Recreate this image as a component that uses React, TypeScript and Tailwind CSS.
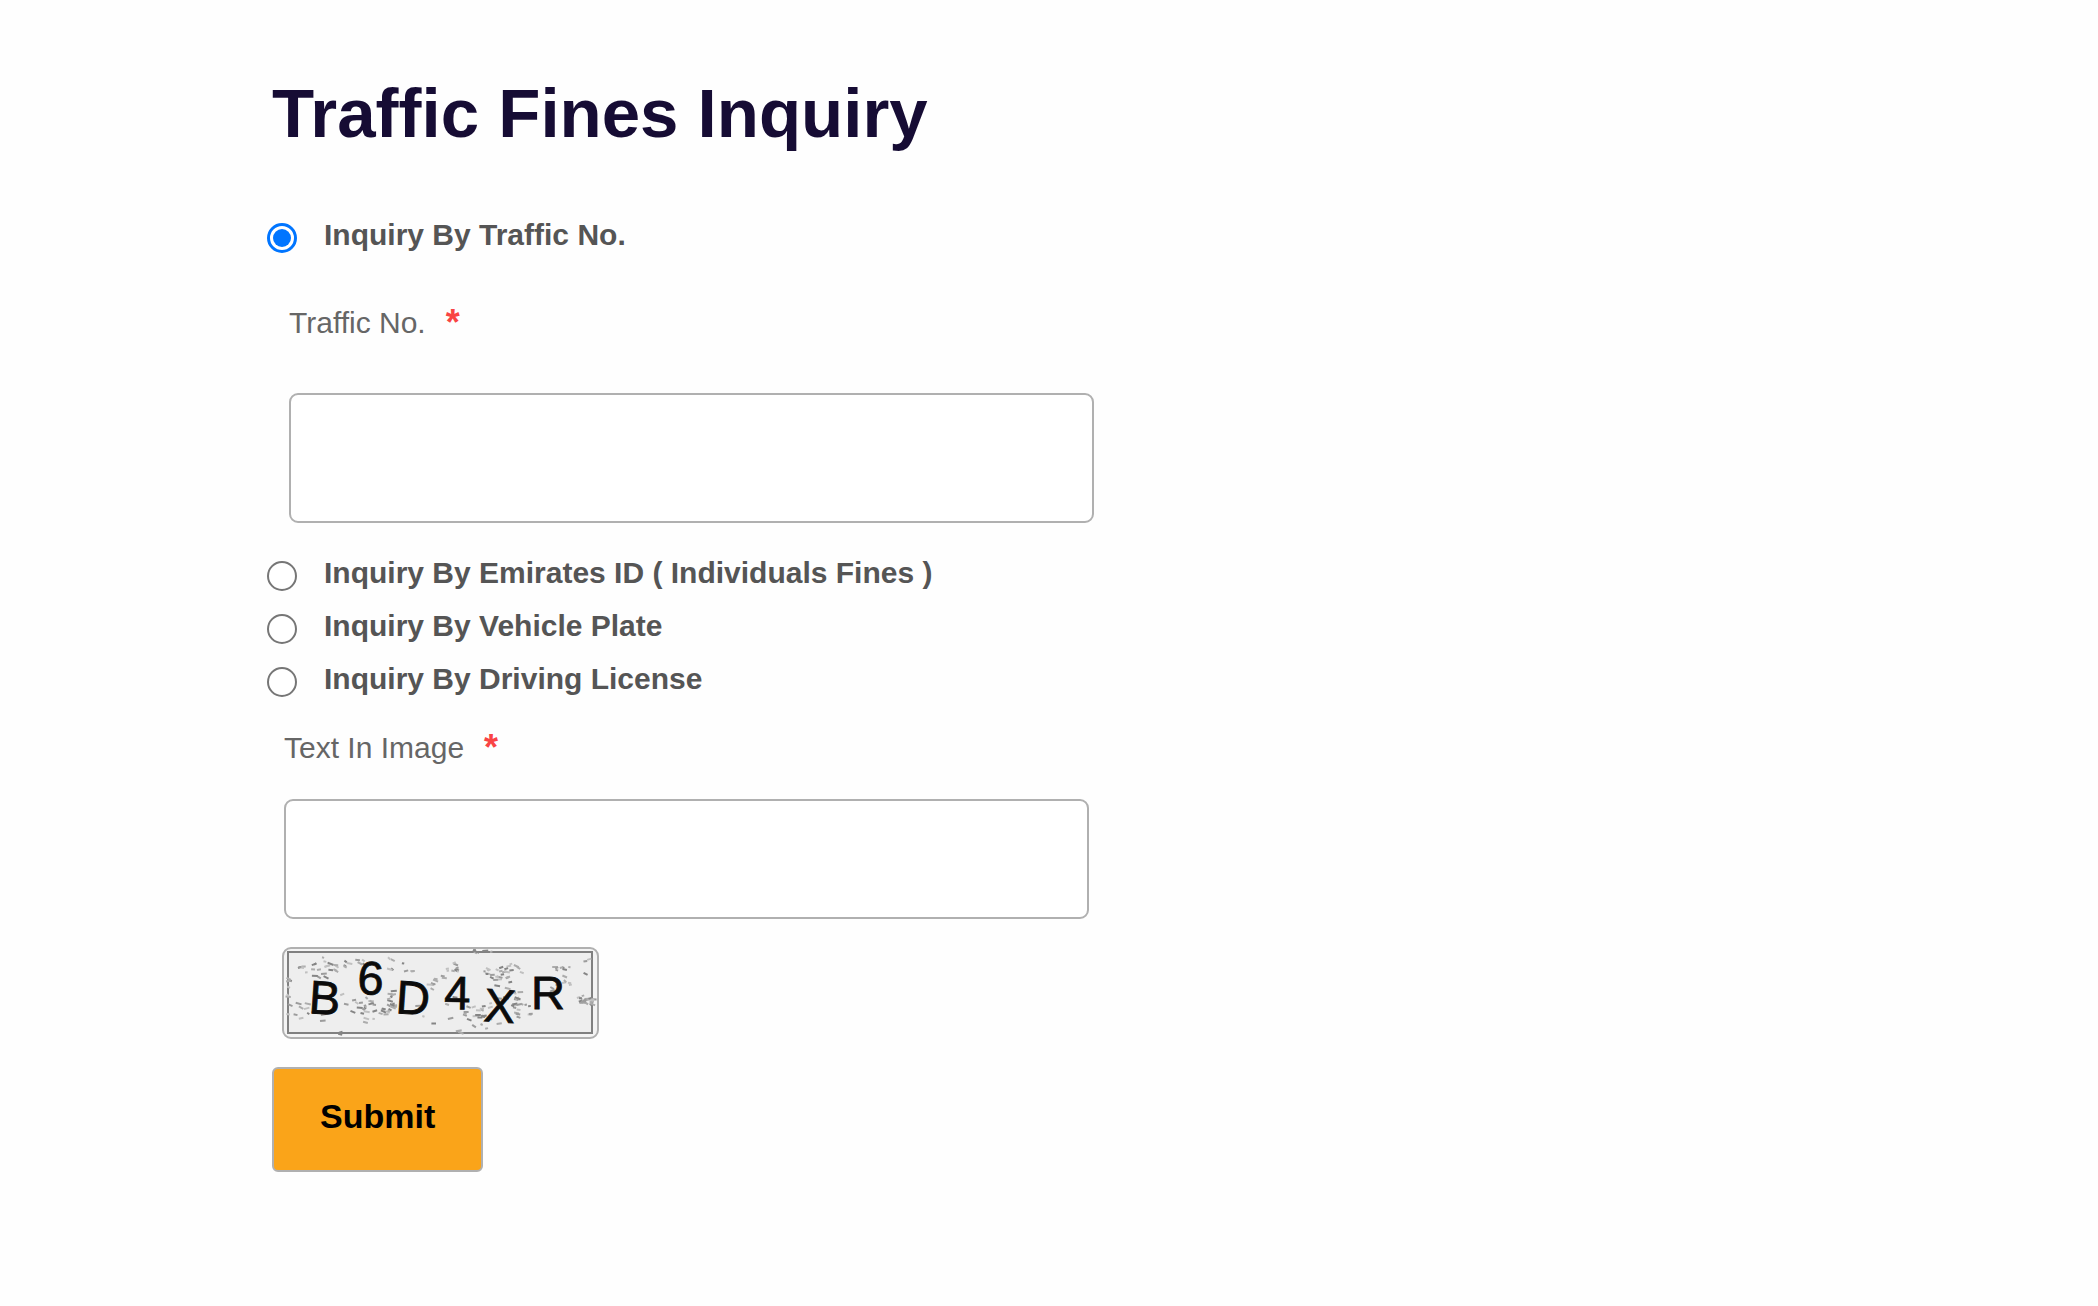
import { useState } from "react";

const font = "font-['Liberation_Sans',Arial,sans-serif]";

const captchaChars = [
  { ch: "B", x: 24, y: 64, tilt: 4 },
  { ch: "6", x: 73, y: 45, tilt: 2 },
  { ch: "D", x: 111, y: 64, tilt: 4 },
  { ch: "4", x: 160, y: 60, tilt: 1 },
  { ch: "X", x: 199, y: 72, tilt: 4 },
  { ch: "R", x: 247, y: 60, tilt: 0 },
];

// Centre x, centre y, half width, half height, number of strokes
const clusters = [
  [30, 20, 16, 8, 18],
  [60, 16, 22, 8, 14],
  [25, 55, 16, 18, 12],
  [72, 54, 16, 8, 12],
  [92, 64, 16, 10, 18],
  [106, 52, 3, 10, 14],
  [112, 16, 16, 8, 8],
  [150, 35, 12, 10, 8],
  [166, 18, 7, 5, 9],
  [192, 62, 14, 8, 20],
  [212, 26, 14, 9, 22],
  [222, 44, 14, 12, 12],
  [228, 18, 8, 5, 5],
  [236, 62, 10, 8, 14],
  [277, 26, 10, 10, 14],
  [270, 44, 8, 6, 6],
  [300, 51, 8, 4, 20],
  [185, 78, 40, 5, 7],
  [150, 58, 24, 16, 6],
  [3, 45, 2, 25, 8],
  [198, 2, 10, 1, 6],
  [303, 20, 5, 10, 3],
  [58, 84, 4, 1, 2],
];

function makeNoise() {
  let seed = 11;
  const rnd = () => {
    seed = (seed * 16807) % 2147483647;
    return seed / 2147483647;
  };
  const shades = ["#9c9c9c", "#acacac", "#c0c0c0", "#858585"];
  return clusters.flatMap(([cx, cy, rx, ry, n]) =>
    Array.from({ length: n }, () => {
      const x = cx + (rnd() * 2 - 1) * rx;
      const y = cy + (rnd() * 2 - 1) * ry;
      const dx = 2 + rnd() * 4;
      const dy = (rnd() - 0.4) * 4;
      return {
        d: `M${x.toFixed(1)} ${y.toFixed(1)}l${dx.toFixed(1)} ${dy.toFixed(1)}`,
        stroke: shades[Math.floor(rnd() * 4)],
      };
    }),
  );
}

const noise = makeNoise();

function Captcha() {
  return (
    <div className="mt-7 ml-[10px] w-[317px] overflow-hidden rounded-[9px] border-2 border-[#b0b0b0] bg-[#f4f4f4]">
      <svg viewBox="0 0 313 88" className="block w-full" role="img" aria-label="Captcha image">
        <rect x="4" y="3" width="304" height="81" fill="#eeeeee" stroke="#808080" strokeWidth="2" />
        {noise.map((n, i) => (
          <path key={i} d={n.d} stroke={n.stroke} strokeWidth="2" fill="none" />
        ))}
        {captchaChars.map((c) => (
          <g key={c.ch} transform={`translate(${c.x} ${c.y}) rotate(${c.tilt})`}>
            <text
              fontFamily="Liberation Sans, Arial, sans-serif"
              fontSize="47"
              fill="#0b0b0b"
              stroke="#0b0b0b"
              strokeWidth="0.8"
            >
              {c.ch}
            </text>
          </g>
        ))}
      </svg>
    </div>
  );
}

function Option({
  id,
  label,
  value,
  onChange,
}: {
  id: string;
  label: string;
  value: string;
  onChange: (id: string) => void;
}) {
  return (
    <div className="-ml-[5px] flex h-[53px] items-start">
      <input
        type="radio"
        name="inquiry"
        id={id}
        checked={value === id}
        onChange={() => onChange(id)}
        className="mt-[11px] grid size-[30px] shrink-0 appearance-none place-items-center rounded-full border-2 border-[#767676] bg-white before:size-[18px] before:rounded-full checked:border-[3px] checked:border-[#0075ff] checked:before:bg-[#0075ff]"
      />
      <label htmlFor={id} className="ml-[27px] text-[30px] leading-[45px] font-bold text-[#555555]">
        {label}
      </label>
    </div>
  );
}

function FieldLabel({ htmlFor, text }: { htmlFor: string; text: string }) {
  return (
    <label htmlFor={htmlFor} className="flex text-[30px] leading-[45px] text-[#666666]">
      {text}
      <span className="ml-5 text-[36px] font-bold text-[#f94444]">*</span>
    </label>
  );
}

const inputStyle =
  "block w-full rounded-[9px] border-2 border-[#b0b0b0] bg-white px-6 text-[30px] text-[#555555] outline-none";

export default function App() {
  const [mode, setMode] = useState("traffic");
  return (
    <main className={`min-h-screen bg-[#fefefe] pt-[72px] pr-6 pb-16 pl-[272px] ${font}`}>
      <form className="max-w-[822px]" onSubmit={(e) => e.preventDefault()}>
        <h1 className="mb-14 text-[69px] leading-[84px] font-bold text-[#160c34]">
          Traffic Fines Inquiry
        </h1>

        <Option id="traffic" label="Inquiry By Traffic No." value={mode} onChange={setMode} />
        <div className="mb-[27px] pt-[35px] pl-[17px]">
          <FieldLabel htmlFor="traffic-no" text="Traffic No." />
          <input id="traffic-no" type="text" className={`mt-12 h-[130px] ${inputStyle}`} />
        </div>

        <Option
          id="emirates"
          label="Inquiry By Emirates ID ( Individuals Fines )"
          value={mode}
          onChange={setMode}
        />
        <Option id="plate" label="Inquiry By Vehicle Plate" value={mode} onChange={setMode} />
        <Option id="license" label="Inquiry By Driving License" value={mode} onChange={setMode} />

        <div className="mr-[5px] pt-4 pl-3">
          <FieldLabel htmlFor="captcha" text="Text In Image" />
          <input id="captcha" type="text" className={`mt-[29px] h-[120px] ${inputStyle}`} />
        </div>

        <Captcha />

        <button
          type="submit"
          className="mt-7 rounded-[6px] border-2 border-[#b0b0b0] bg-[#faa419] px-[46px] pt-[27px] pb-[34px] text-[34px] leading-10 font-bold text-black"
        >
          Submit
        </button>
      </form>
    </main>
  );
}
